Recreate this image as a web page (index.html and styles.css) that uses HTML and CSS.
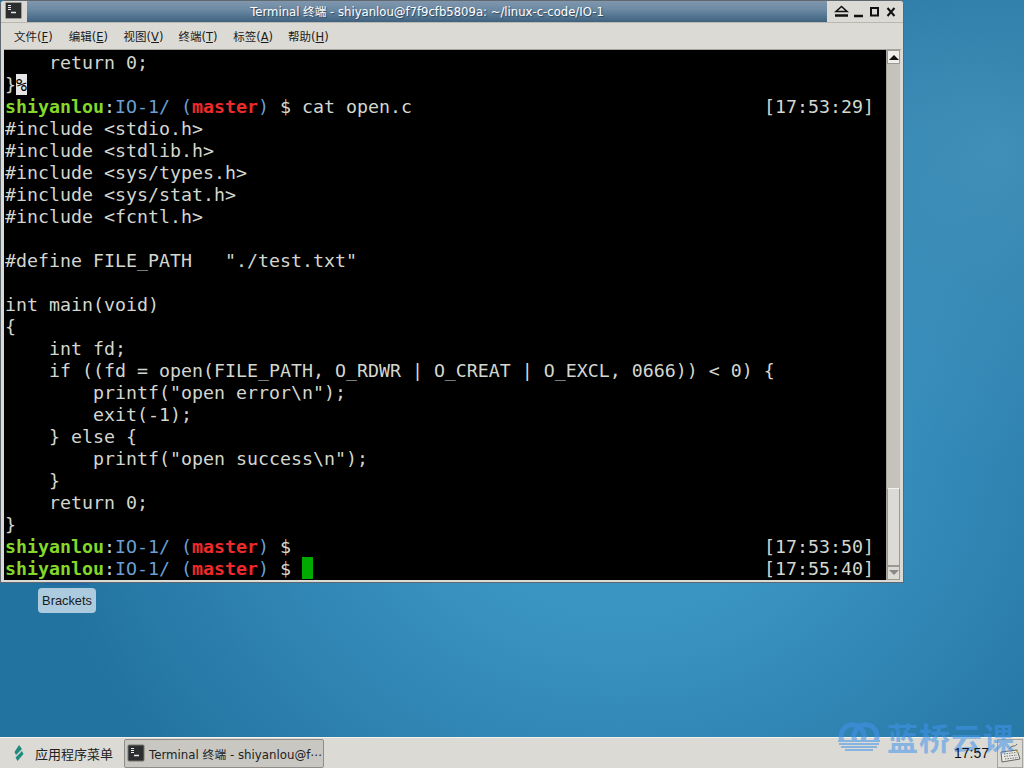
FILE: index.html
```html
<!DOCTYPE html>
<html lang="zh">
<head>
<meta charset="utf-8">
<title>Terminal 终端</title>
<link rel="stylesheet" href="styles.css">
</head>
<body>
<main class="desktop">
  <section class="window">
    <header class="titlebar">
      <div class="title-icon">
        <svg width="24" height="21" viewBox="0 0 24 21"><rect x="4.500" y="1.500" width="16" height="16" rx="1" fill="#2b2d2e" stroke="#9a9a96"/><path d="M7 4.500h3M7 6.500h3M7 8.500h3" stroke="#e8e8e8"/><path d="M10 11.500h5" stroke="#e8e8e8" stroke-width="1.400"/></svg>
      </div>
      <div class="title-text">Terminal 终端 - shiyanlou@f7f9cfb5809a: ~/linux-c-code/IO-1</div>
      <div class="title-buttons">
        <svg width="72" height="22" viewBox="0 0 72 22"><path d="M6 10.500l5.500-5 5.500 5z" fill="none" stroke="#111" stroke-width="1.600"/><path d="M5 14.500h13" stroke="#111" stroke-width="2.400"/><path d="M24 15h9" stroke="#111" stroke-width="2.400"/><rect x="41" y="7" width="7" height="7.500" fill="none" stroke="#111" stroke-width="2"/><path d="M57.500 7l7 8M64.500 7l-7 8" stroke="#111" stroke-width="2"/></svg>
      </div>
    </header>
    <nav class="menubar">
      <span class="menu-item">文件(<u>F</u>)</span>
      <span class="menu-item">编辑(<u>E</u>)</span>
      <span class="menu-item">视图(<u>V</u>)</span>
      <span class="menu-item">终端(<u>T</u>)</span>
      <span class="menu-item">标签(<u>A</u>)</span>
      <span class="menu-item">帮助(<u>H</u>)</span>
    </nav>
    <div class="term-wrap">
      <div class="terminal">
        <div class="line">    return 0;</div>
        <div class="line">}<span class="inv">%</span></div>
        <div class="line prompt"><span><b class="g">shiyanlou</b>:<span class="b">IO-1/</span> <span class="b">(</span><b class="r">master</b><span class="b">)</span> $ cat open.c</span><span>[17:53:29]</span></div>
        <div class="line">#include &lt;stdio.h&gt;</div>
        <div class="line">#include &lt;stdlib.h&gt;</div>
        <div class="line">#include &lt;sys/types.h&gt;</div>
        <div class="line">#include &lt;sys/stat.h&gt;</div>
        <div class="line">#include &lt;fcntl.h&gt;</div>
        <div class="line"> </div>
        <div class="line">#define FILE_PATH   "./test.txt"</div>
        <div class="line"> </div>
        <div class="line">int main(void)</div>
        <div class="line">{</div>
        <div class="line">    int fd;</div>
        <div class="line">    if ((fd = open(FILE_PATH, O_RDWR | O_CREAT | O_EXCL, 0666)) &lt; 0) {</div>
        <div class="line">        printf("open error\n");</div>
        <div class="line">        exit(-1);</div>
        <div class="line">    } else {</div>
        <div class="line">        printf("open success\n");</div>
        <div class="line">    }</div>
        <div class="line">    return 0;</div>
        <div class="line">}</div>
        <div class="line prompt"><span><b class="g">shiyanlou</b>:<span class="b">IO-1/</span> <span class="b">(</span><b class="r">master</b><span class="b">)</span> $</span><span>[17:53:50]</span></div>
        <div class="line prompt"><span><b class="g">shiyanlou</b>:<span class="b">IO-1/</span> <span class="b">(</span><b class="r">master</b><span class="b">)</span> $ <span class="cursor"> </span></span><span>[17:55:40]</span></div>
      </div>
      <div class="scrollbar">
        <div class="sb-btn"><svg width="10" height="6" viewBox="0 0 10 6"><path d="M0 6l5-5 5 5z" fill="#111"/></svg></div>
        <div class="sb-track"><div class="sb-thumb"></div></div>
        <div class="sb-btn sb-btn-down"><svg width="10" height="6" viewBox="0 0 10 6"><path d="M0 0l5 5 5-5z" fill="#888"/></svg></div>
      </div>
    </div>
  </section>
  <div class="icon-sliver"></div>
  <div class="desk-label">Brackets</div>
  <footer class="taskbar">
    <div class="app-menu">
      <svg width="18" height="22" viewBox="0 0 18 22"><path d="M10 3l3 4-6 6-1.500-3z M13 9l1.500 3-6 7-2-3.500z" fill="#1f8a7d"/></svg>
      <span>应用程序菜单</span>
    </div>
    <div class="task-btn">
      <svg class="task-icon" width="18" height="18" viewBox="0 0 18 18"><rect x="1" y="1" width="16" height="16" rx="1" fill="#2b2d2e" stroke="#77776f"/><path d="M4 4.500h3M4 6.500h3M4 8.500h3" stroke="#eee"/><path d="M7 11.500h5" stroke="#eee" stroke-width="1.300"/></svg>
      <span class="task-label">Terminal 终端 - shiyanlou@f⋯</span>
    </div>
    <div class="tray">
      <span class="clock">17:57</span>
      <div class="kbd-icon">
        <svg width="24" height="24" viewBox="0 0 24 24"><path d="M12 8c0-4 6-2 7-5" fill="none" stroke="#666"/><path d="M3 11l16-2 3 9-18 3z" fill="#e8e8e4" stroke="#666"/><path d="M6 13l12-1.500M6 15.500l13-1.500M7 18l13-1.500" stroke="#777" stroke-dasharray="1.500 1"/><rect x="18" y="10" width="2" height="1.500" fill="#c8c020"/></svg>
      </div>
    </div>
  </footer>
  <div class="watermark">
    <svg width="44" height="32" viewBox="0 0 44 32"><g fill="none" stroke="#4294ec" stroke-width="5"><path d="M5 20a11.500 11.500 0 1 1 21 0"/><path d="M18 20a11.500 11.500 0 1 1 21 0"/></g><path d="M1 20h42M2 23h40M4 26h36M8 29h28" stroke="#4294ec" stroke-width="1.800"/></svg>
    <span>蓝桥云课</span>
  </div>
</main>
</body>
</html>
```
FILE: styles.css
```css
* { box-sizing: border-box; }
html, body { margin: 0; padding: 0; }
.desktop {
  position: relative;
  width: 1024px;
  height: 768px;
  overflow: hidden;
  background:
    radial-gradient(circle 320px at 1000px 150px, rgba(72,150,190,.75) 0%, rgba(72,150,190,0) 100%),
    radial-gradient(ellipse 580px 520px at 620px 440px, #3e9ac8 0%, #3a94c2 35%, #2373a0 100%);
  font-family: "DejaVu Sans", "Noto Sans CJK SC", sans-serif;
}
.window {
  position: absolute;
  left: 0;
  top: 0;
  width: 904px;
  height: 583px;
  display: flex;
  flex-direction: column;
  background: #dcdad5;
  border: 1px solid #5f686e;
  border-radius: 4px 4px 0 0;
  overflow: hidden;
}
.titlebar {
  height: 22px;
  display: flex;
  align-items: stretch;
  border-bottom: 1px solid #b9b7b0;
  background: #dcdad5;
  flex: none;
}
.title-icon { width: 26px; background: #dcdad5; flex: none; }
.title-text {
  flex: 1;
  height: 21px;
  text-align: center;
  font-size: 11.650px;
  line-height: 22px;
  color: #fff;
  text-shadow: 1px 1px 1px #2d4660;
  background: linear-gradient(#8097ad 0%, #6c8aa3 40%, #3f6280 100%);
}
.title-buttons { width: 76px; flex: none; padding-left: 3px; }
.title-buttons svg { display: block; }
.menubar {
  height: 26px;
  flex: none;
  display: flex;
  align-items: center;
  padding-left: 5px;
  font-size: 11.500px;
  color: #1a1a1a;
}
.menu-item { padding: 0 0 0 8px; width: 54.800px; white-space: nowrap; }
.menu-item u { text-underline-offset: 1px; }
.term-wrap {
  display: flex;
  height: 531px;
  flex: none;
  margin: 0 2px 0 3px;
  border-top: 1px solid #a6a49d;
}
.terminal {
  width: 882px;
  height: 530px;
  flex: none;
  background: #000;
  color: #d3d7cf;
  font-family: "DejaVu Sans Mono", monospace;
  font-size: 18.270px;
  line-height: 22px;
  padding: 2px 12px 0 1px;
  overflow: hidden;
}
.line { height: 22px; white-space: pre; }
.prompt { display: flex; justify-content: space-between; }
.g { color: #84d82a; font-weight: bold; }
.b { color: #6a9fd2; }
.r { color: #ee2a2a; font-weight: bold; }
.inv { background: #e6e6e6; color: #000; }
.cursor { display: inline-block; width: 11px; height: 22px; margin-top: -1px; background: #00aa00; vertical-align: top; }
.scrollbar {
  flex: 1;
  display: flex;
  flex-direction: column;
  background: #c4c2bb;
  border-left: 1px solid #a6a49d;
  border-right: 1px solid #dcdad5;
}
.sb-btn {
  height: 14px;
  flex: none;
  display: flex;
  align-items: center;
  justify-content: center;
  background: #f0efeb;
  border: 1px solid #9b9992;
}
.sb-btn-down { background: #dcdad5; }
.sb-track { flex: 1; display: flex; flex-direction: column; justify-content: flex-end; }
.sb-thumb { height: 78px; background: #dcdad5; border: 1px solid #9b9992; border-top-color: #f3f2ee; }
.icon-sliver {
  position: absolute;
  left: 45px;
  top: 583px;
  width: 44px;
  height: 2px;
  background: #2168a8;
}
.desk-label {
  position: absolute;
  left: 38px;
  top: 588px;
  width: 58px;
  height: 25px;
  border-radius: 4px;
  background: #accbdf;
  color: #1a1a1a;
  font-family: "Liberation Sans", sans-serif;
  font-size: 12.800px;
  line-height: 25px;
  text-align: center;
}
.taskbar {
  position: absolute;
  left: 0;
  right: 0;
  bottom: 0;
  height: 31px;
  display: flex;
  align-items: center;
  background: #dcdad5;
  border-top: 1px solid #f3f2ee;
  color: #222;
}
.app-menu { display: flex; align-items: center; gap: 8px; padding-left: 9px; width: 124px; flex: none; white-space: nowrap; font-size: 13px; }
.task-btn {
  width: 200px;
  height: 29px;
  display: flex;
  align-items: center;
  gap: 4px;
  padding-left: 2px;
  background: #c9c7c1;
  border: 1px solid #8f8d87;
  border-radius: 2px;
  white-space: nowrap;
  overflow: hidden;
  flex: none;
}
.task-icon { flex: none; }
.task-label { font-size: 11.800px; }
.tray { margin-left: auto; display: flex; align-items: center; gap: 8px; padding-right: 1px; height: 30px; }
.clock { font-family: "Liberation Sans", sans-serif; font-size: 14px; line-height: 20px; color: #111; position: relative; z-index: 2; }
.kbd-icon { width: 26px; height: 29px; border: 1px solid #a5a39d; display: flex; align-items: center; justify-content: center; }
.watermark {
  position: absolute;
  left: 837px;
  top: 721px;
  display: flex;
  align-items: center;
  gap: 6px;
  opacity: 0.55;
  pointer-events: none;
}
.watermark svg { flex: none; }
.watermark span {
  font-family: "Noto Sans CJK SC", sans-serif;
  font-weight: 700;
  font-size: 31px;
  line-height: 32px;
  letter-spacing: 1px;
  color: #4294ec;
  white-space: nowrap;
}
```
